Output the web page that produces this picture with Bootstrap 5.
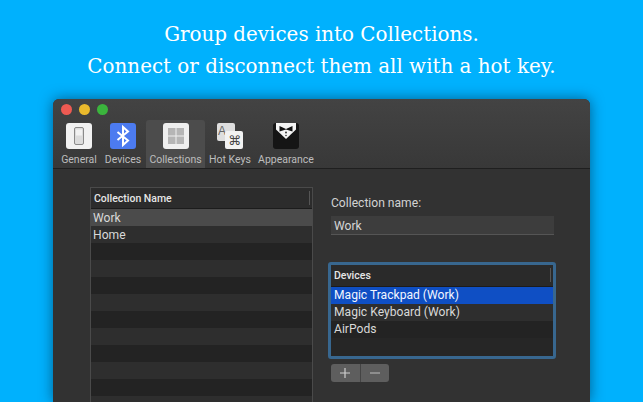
<!DOCTYPE html>
<html lang="en">
<head>
<meta charset="utf-8">
<title>Collections</title>
<link href="https://cdn.jsdelivr.net/npm/bootstrap@5.3.0/dist/css/bootstrap.min.css" rel="stylesheet">
<style>
html,body{height:402px;overflow:hidden;}
body{background:#00b1fd;font-family:Roboto,"Liberation Sans",sans-serif;color:#d8d8d8;}
.headline{height:99px;padding-top:19px;color:#fff;font-family:"DejaVu Serif",serif;font-size:19.9px;line-height:32px;text-align:center;}
.headline div{height:32px;}
.appwin{width:537px;height:303px;margin-left:53px;background:#323232;border-radius:6px 6px 0 0;box-shadow:0 0 14px rgba(0,40,70,.6);overflow:hidden;}
.topbar{height:70px;background:linear-gradient(#434343,#383838);border-bottom:1px solid #1f1f1f;padding:0 0 0 7px;}
.lights{height:21px;padding:5px 0 0 1px;gap:7px;}
.dot{width:11px;height:11px;border-radius:50%;}
.dot-r{background:#ee5a52;}.dot-y{background:#e9b92c;}.dot-g{background:#3bb53d;}
.tabstrip{height:48px;}
.tabcell{height:48px;padding-top:3px;font-size:10.500px;line-height:12px;color:#bdbdbd;text-align:center;white-space:nowrap;}
.tabcell svg{display:block;margin:0 auto 5px;}
.tabcell.on{background:#4c4c4c;border-radius:3px 3px 0 0;}
.c1{width:38px}.c2{width:44px;margin-left:3px}.c3{width:59px;margin-left:1px;}.c4{width:50px}.c5{width:62px;}
.panelbody{padding:18px 35px 0 37px;}
.leftlist{width:223px;border:1px solid #4a4a4a;border-bottom:0;height:220px;background:#232323;overflow:hidden;flex:none;}
.lh{height:21px;background:#2c2c2c;font-size:10.500px;font-weight:500;line-height:21px;padding-left:3px;color:#e6e6e6;position:relative;border-bottom:1px solid #1c1c1c;}
.lh::after{content:"";position:absolute;right:2px;top:3px;height:14px;border-right:1px solid #555;}
.rw{height:17px;font-size:12.100px;line-height:17px;padding-left:2px;color:#d9d9d9;}
.leftlist .rw{line-height:19px;}
.devbox .rw{padding-left:3px;}
.rw.alt{background:#2e2e2e;}
.rw.dim{background:#232323;}
.rw.pick{background:#4b4b4b;}
.rw.blue{background:#0f4fc4;color:#f2f6ff;}
.rightcol{margin-left:17px;width:228px;}
.fieldlabel{font-size:12.100px;line-height:16px;margin:8px 0 5px 1px;color:#d2d2d2;}
.fieldinput{width:223px;height:19px;margin-left:1px;background:#3d3d3d;border-bottom:1px solid #555;font-size:12.100px;line-height:21px;padding-left:3px;color:#d6d6d6;}
.devbox{width:228px;height:97px;margin:27px 0 0 -2px;border:3px solid #38678f;border-radius:3px;background:#262626;overflow:hidden;}
.devbox .lh{height:22px;line-height:21px;padding-left:3px;background:#2a2a2a;}
.btnpair{width:58px;height:18px;margin:5px 0 0 1px;border-radius:3px;background:#5e5e5e;overflow:hidden;}
.pm{flex:1;line-height:0;display:flex;align-items:center;justify-content:center;}
.pm+.pm{border-left:1px solid #444;}
</style>
</head>
<body>
<div class="headline">
  <div>Group devices into Collections.</div>
  <div>Connect or disconnect them all with a hot key.</div>
</div>
<div class="appwin">
  <div class="topbar">
    <div class="lights d-flex"><span class="dot dot-r"></span><span class="dot dot-y"></span><span class="dot dot-g"></span></div>
    <div class="tabstrip d-flex">
      <div class="tabcell c1">
        <svg width="26" height="26" viewBox="0 0 26 26"><rect width="26" height="26" rx="3" fill="#f1f1f1"/><rect x="8.500" y="4.500" width="9" height="17" rx="1.500" fill="#dcdcdc" stroke="#8a8a8a"/><rect x="10" y="6.500" width="6" height="6" fill="#f2f2f2"/></svg>General</div>
      <div class="tabcell c2">
        <svg width="26" height="26" viewBox="0 0 26 26"><rect width="26" height="26" rx="3" fill="#4c7bf0"/><path d="M7.500 9 18 17.500 13 22V4L18 8.500 7.500 17" fill="none" stroke="#fff" stroke-width="2"/></svg>Devices</div>
      <div class="tabcell c3 on">
        <svg width="26" height="26" viewBox="0 0 26 26"><rect width="26" height="26" rx="3" fill="#efefef"/><rect x="5" y="5" width="7.500" height="7.500" fill="#b5b5b5"/><rect x="13.500" y="5" width="7.500" height="7.500" fill="#b5b5b5"/><rect x="5" y="13.500" width="7.500" height="7.500" fill="#b5b5b5"/><rect x="13.500" y="13.500" width="7.500" height="7.500" fill="#b5b5b5"/></svg>Collections</div>
      <div class="tabcell c4">
        <svg width="26" height="26" viewBox="0 0 26 26"><rect width="18" height="18" rx="2" fill="#dedede"/><text x="1" y="11.500" font-size="12" fill="#666" font-family="Liberation Sans">A</text><rect x="8" y="8" width="18" height="18" rx="2" fill="#f2f2f2"/><text x="17.500" y="22" font-size="13" fill="#444" text-anchor="middle" font-family="DejaVu Sans">⌘</text></svg>Hot Keys</div>
      <div class="tabcell c5">
        <svg width="26" height="26" viewBox="0 0 26 26"><rect width="26" height="26" rx="3" fill="#151515"/><path d="M3 0H23V6.500L13 16 3 6.500Z" fill="#f4f4f4"/><path d="M6.500 3 13 6 19.500 3 19.500 8.500 13 6.500 6.500 8.500Z" fill="#111"/><circle cx="13" cy="9.500" r=".9" fill="#222"/><circle cx="13" cy="12.500" r=".8" fill="#333"/></svg>Appearance</div>
    </div>
  </div>
  <div class="panelbody d-flex">
    <div class="leftlist">
      <div class="lh">Collection Name</div>
      <div class="rw pick">Work</div>
      <div class="rw alt">Home</div>
      <div class="rw dim"></div><div class="rw alt"></div>
      <div class="rw dim"></div><div class="rw alt"></div>
      <div class="rw dim"></div><div class="rw alt"></div>
      <div class="rw dim"></div><div class="rw alt"></div>
      <div class="rw dim"></div><div class="rw alt"></div>
    </div>
    <div class="rightcol">
      <div class="fieldlabel">Collection name:</div>
      <div class="fieldinput">Work</div>
      <div class="devbox">
        <div class="lh">Devices</div>
        <div class="rw blue">Magic Trackpad (Work)</div>
        <div class="rw alt">Magic Keyboard (Work)</div>
        <div class="rw dim">AirPods</div>
      </div>
      <div class="btnpair d-flex">
        <div class="pm"><svg width="12" height="12" viewBox="0 0 12 12"><path d="M6 1V11M1 6H11" stroke="#cfcfcf" stroke-width="1.200"/></svg></div>
        <div class="pm"><svg width="12" height="12" viewBox="0 0 12 12"><path d="M1 6H11" stroke="#bdbdbd" stroke-width="1.200"/></svg></div>
      </div>
    </div>
  </div>
</div>
</body>
</html>
